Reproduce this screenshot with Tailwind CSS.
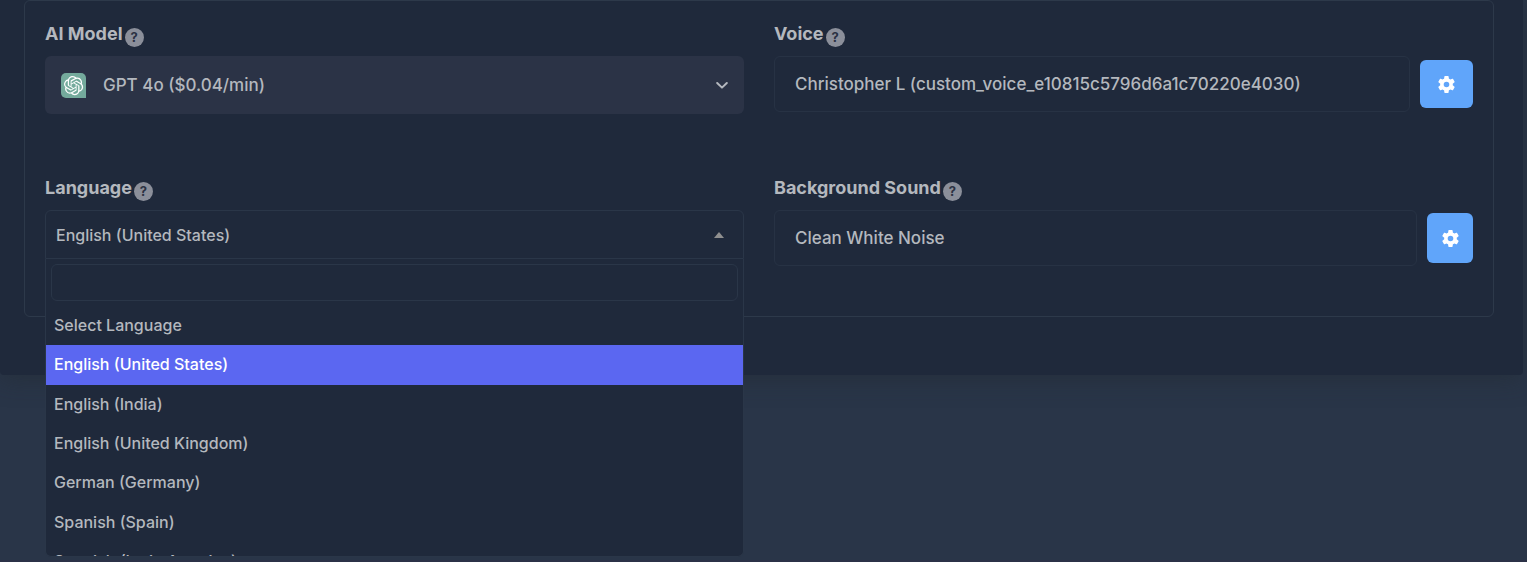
<!DOCTYPE html>
<html lang="en">
<head>
    <meta charset="UTF-8">
    <meta name="viewport" content="width=device-width, initial-scale=1.0">
    <title>Agent Settings</title>
    <script src="https://cdn.jsdelivr.net/npm/@tailwindcss/browser@4"></script>
</head>
<body class="flex min-h-screen flex-col overflow-hidden bg-[#293548] font-['Inter',sans-serif] text-[#b4b8be]">

    <main class="mr-1 rounded-b bg-[#1f293b] pl-6 pr-[29px] pb-[58px] shadow-[0_4px_24px_rgba(34,41,47,0.5)]">
        <form class="grid grid-cols-2 gap-x-[30px] gap-y-10 rounded-md border border-[#2d394a] px-5 pt-5 pb-[50px]">

            <!-- AI model -->
            <div class="h-[114px]">
                <div class="flex h-[35px] gap-0.5">
                    <label for="modelBtn" class="text-[18px]/[26px] font-bold">AI Model</label>
                    <span class="mt-[7px] flex size-[19px] items-center justify-center rounded-full bg-[#8b8f9a] text-[13px]/[19px] font-bold text-[#2b3243]" title="Model used by the agent">?</span>
                </div>
                <button type="button" id="modelBtn" class="flex h-[58px] w-full items-center rounded-md bg-[#2b3346] px-4 text-left">
                    <svg class="size-[25px]" viewBox="0 0 25 25" aria-hidden="true">
                        <path d="M5 0h15a5 5 0 0 1 5 5v20H5a5 5 0 0 1-5-5V5a5 5 0 0 1 5-5z" fill="#74aa9c"/>
                        <g transform="translate(3 3) scale(.8)" fill="#fff">
                            <path d="M22.282 9.821a5.985 5.985 0 0 0-.516-4.91 6.046 6.046 0 0 0-6.51-2.9A6.065 6.065 0 0 0 4.981 4.18a5.985 5.985 0 0 0-3.998 2.9 6.046 6.046 0 0 0 .743 7.097 5.98 5.98 0 0 0 .51 4.911 6.051 6.051 0 0 0 6.515 2.9A5.985 5.985 0 0 0 13.26 24a6.056 6.056 0 0 0 5.772-4.206 5.99 5.99 0 0 0 3.997-2.9 6.056 6.056 0 0 0-.747-7.073zM13.26 22.43a4.476 4.476 0 0 1-2.876-1.04l.141-.081 4.779-2.758a.795.795 0 0 0 .392-.681v-6.737l2.02 1.168a.071.071 0 0 1 .038.052v5.583a4.504 4.504 0 0 1-4.494 4.494zM3.6 18.304a4.47 4.47 0 0 1-.535-3.014l.142.085 4.783 2.759a.771.771 0 0 0 .78 0l5.843-3.369v2.332a.08.08 0 0 1-.033.062L9.74 19.95a4.5 4.5 0 0 1-6.14-1.646zM2.34 7.896a4.485 4.485 0 0 1 2.366-1.973V11.6a.766.766 0 0 0 .388.676l5.815 3.355-2.02 1.168a.076.076 0 0 1-.071 0l-4.83-2.786A4.504 4.504 0 0 1 2.34 7.872zm16.597 3.855-5.833-3.387L15.119 7.2a.076.076 0 0 1 .071 0l4.83 2.791a4.494 4.494 0 0 1-.676 8.105v-5.678a.79.79 0 0 0-.407-.667zm2.01-3.023-.141-.085-4.774-2.782a.776.776 0 0 0-.785 0L9.409 9.23V6.897a.066.066 0 0 1 .028-.061l4.83-2.787a4.5 4.5 0 0 1 6.68 4.66zm-12.64 4.135-2.02-1.164a.08.08 0 0 1-.038-.057V6.075a4.5 4.5 0 0 1 7.375-3.453l-.142.08L8.704 5.46a.795.795 0 0 0-.393.681zm1.097-2.365 2.602-1.5 2.607 1.5v2.999l-2.597 1.5-2.607-1.5z"/>
                        </g>
                    </svg>
                    <span class="ml-[17px] grow text-[17px]/[24px] font-medium">GPT 4o ($0.04/min)</span>
                    <svg class="size-3" viewBox="0 0 12 12" fill="none" stroke="#b4b8be" stroke-width="2" stroke-linecap="round" stroke-linejoin="round" aria-hidden="true">
                        <path d="M1.2 4 6 8.6 10.8 4"/>
                    </svg>
                </button>
            </div>

            <!-- Voice -->
            <div class="h-[114px]">
                <div class="flex h-[35px] gap-0.5">
                    <label for="voice" class="text-[18px]/[26px] font-bold">Voice</label>
                    <span class="mt-[7px] flex size-[19px] items-center justify-center rounded-full bg-[#8b8f9a] text-[13px]/[19px] font-bold text-[#2b3243]" title="Voice of the agent">?</span>
                </div>
                <div class="flex items-center gap-2.5">
                    <input id="voice" type="text" readonly value="Christopher L (custom_voice_e10815c5796d6a1c70220e4030)" class="h-14 min-w-0 grow rounded-md border border-[#273244] px-5 text-[17px]/[24px] font-medium">
                    <button type="button" aria-label="Voice settings" class="flex h-12 w-[53px] items-center justify-center rounded-md bg-[#60a5fa]">
                        <svg class="size-[21px]" viewBox="0 0 24 24" fill="#fff" aria-hidden="true">
                            <path d="M19.14 12.94c.04-.3.06-.61.06-.94s-.02-.64-.07-.94l2.03-1.58a.49.49 0 0 0 .12-.61l-1.92-3.32a.49.49 0 0 0-.59-.22l-2.39.96a7 7 0 0 0-1.62-.94l-.36-2.54A.48.48 0 0 0 13.92 2.4h-3.84a.48.48 0 0 0-.48.41l-.36 2.54a7 7 0 0 0-1.62.94l-2.39-.96a.49.49 0 0 0-.59.22L2.72 8.87a.48.48 0 0 0 .12.61l2.03 1.58c-.05.3-.09.63-.09.94s.02.64.07.94l-2.03 1.58a.49.49 0 0 0-.12.61l1.92 3.32c.12.22.37.29.59.22l2.39-.96c.5.38 1.03.7 1.62.94l.36 2.54c.05.24.24.41.48.41h3.84c.24 0 .44-.17.47-.41l.36-2.54a7 7 0 0 0 1.62-.94l2.39.96c.22.08.47 0 .59-.22l1.92-3.32a.48.48 0 0 0-.12-.61zM12 15.2a3.2 3.2 0 1 1 0-6.4 3.2 3.2 0 0 1 0 6.4z"/>
                        </svg>
                    </button>
                </div>
            </div>

            <!-- Language -->
            <div>
                <div class="flex h-[35px] gap-0.5">
                    <label for="languageBtn" class="text-[18px]/[26px] font-bold">Language</label>
                    <span class="mt-[7px] flex size-[19px] items-center justify-center rounded-full bg-[#8b8f9a] text-[13px]/[19px] font-bold text-[#2b3243]" title="Spoken language">?</span>
                </div>
                <div class="relative">
                    <button type="button" id="languageBtn" aria-expanded="true" aria-controls="languageList" class="flex h-[49px] w-full items-center justify-between rounded-t-md border border-[#2a3648] pr-[19px] pl-2.5 text-left">
                        <span class="text-[16px]/[24px] font-medium">English (United States)</span>
                        <svg class="h-1.5 w-2.5" viewBox="0 0 10 6" fill="#8f8f8f" aria-hidden="true"><path d="M0 6 5 0l5 6z"/></svg>
                    </button>
                    <div class="absolute inset-x-0 top-[49px] z-10 overflow-hidden rounded-b-md border border-t-0 border-[#2a3648] bg-[#1f293b]">
                        <div class="p-[5px]">
                            <input type="search" aria-label="Search language" class="block h-[37px] w-full rounded-md border border-[#2a3648] px-2 text-[16px]/[24px]">
                        </div>
                        <div class="h-[250px] overflow-y-auto [scrollbar-width:none]">
                            <ul id="languageList" role="listbox" class="grid h-[276px] grid-rows-7 text-[16px]/[24px] font-medium">
                                <li role="option" class="flex items-center px-2 pb-0.5">Select Language</li>
                                <li role="option" aria-selected="true" class="flex items-center bg-[#5b67f1] px-2 pb-0.5 text-white">English (United States)</li>
                                <li role="option" class="flex items-center px-2 pb-0.5">English (India)</li>
                                <li role="option" class="flex items-center px-2 pb-0.5">English (United Kingdom)</li>
                                <li role="option" class="flex items-center px-2 pb-0.5">German (Germany)</li>
                                <li role="option" class="flex items-center px-2 pb-0.5">Spanish (Spain)</li>
                                <li role="option" class="flex items-center px-2 pb-0.5">Spanish (Latin America)</li>
                            </ul>
                        </div>
                    </div>
                </div>
            </div>

            <!-- Background sound -->
            <div>
                <div class="flex h-[35px] gap-0.5">
                    <label for="sound" class="text-[18px]/[26px] font-bold">Background Sound</label>
                    <span class="mt-[7px] flex size-[19px] items-center justify-center rounded-full bg-[#8b8f9a] text-[13px]/[19px] font-bold text-[#2b3243]" title="Sound played during the call">?</span>
                </div>
                <div class="flex items-center gap-2.5">
                    <input id="sound" type="text" readonly value="Clean White Noise" class="h-14 min-w-0 grow rounded-md border border-[#273244] px-5 text-[17px]/[24px] font-medium">
                    <button type="button" aria-label="Background sound settings" class="flex h-[50px] w-[46px] items-center justify-center rounded-md bg-[#60a5fa]">
                        <svg class="size-[21px]" viewBox="0 0 24 24" fill="#fff" aria-hidden="true">
                            <path d="M19.14 12.94c.04-.3.06-.61.06-.94s-.02-.64-.07-.94l2.03-1.58a.49.49 0 0 0 .12-.61l-1.92-3.32a.49.49 0 0 0-.59-.22l-2.39.96a7 7 0 0 0-1.62-.94l-.36-2.54A.48.48 0 0 0 13.92 2.4h-3.84a.48.48 0 0 0-.48.41l-.36 2.54a7 7 0 0 0-1.62.94l-2.39-.96a.49.49 0 0 0-.59.22L2.72 8.87a.48.48 0 0 0 .12.61l2.03 1.58c-.05.3-.09.63-.09.94s.02.64.07.94l-2.03 1.58a.49.49 0 0 0-.12.61l1.92 3.32c.12.22.37.29.59.22l2.39-.96c.5.38 1.03.7 1.62.94l.36 2.54c.05.24.24.41.48.41h3.84c.24 0 .44-.17.47-.41l.36-2.54a7 7 0 0 0 1.62-.94l2.39.96c.22.08.47 0 .59-.22l1.92-3.32a.48.48 0 0 0-.12-.61zM12 15.2a3.2 3.2 0 1 1 0-6.4 3.2 3.2 0 0 1 0 6.4z"/>
                        </svg>
                    </button>
                </div>
            </div>
        </form>
    </main>

    <footer class="mt-auto h-0.5 bg-[#2b3147]"></footer>

</body>
</html>
